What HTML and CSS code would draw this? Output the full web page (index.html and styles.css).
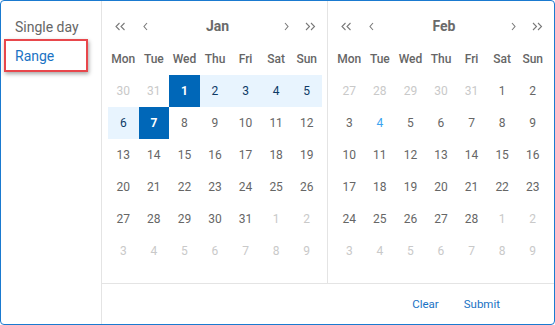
FILE: index.html
```html
<!DOCTYPE html>
<html lang="en">
<head>
    <meta charset="UTF-8">
    <meta name="viewport" content="width=device-width, initial-scale=1.0">
    <title>Date range picker</title>
    <link rel="stylesheet" href="styles.css">
</head>
<body>
    <div class="picker">
        <div class="sidebar">
            <div class="option">Single day</div>
            <div class="option active">Range</div>
        </div>
        <div class="main">
            <div class="months">
                <div class="month" id="month-jan"></div>
                <div class="month" id="month-feb"></div>
            </div>
            <div class="footer">
                <button class="link">Clear</button>
                <button class="link">Submit</button>
            </div>
        </div>
    </div>

    <script>
        const dayNames = ["Mon", "Tue", "Wed", "Thu", "Fri", "Sat", "Sun"];
        const rangeStart = new Date(2025, 0, 1);
        const rangeEnd = new Date(2025, 0, 7);
        const today = new Date(2025, 1, 4);

        const chevron = (dir, double) => {
            let paths = dir === "left"
                ? (double ? "M4.5 1 L1 4.5 L4.5 8 M9.5 1 L6 4.5 L9.5 8" : "M4 1 L1 4.5 L4 8")
                : (double ? "M1 1 L4.5 4.5 L1 8 M6 1 L9.5 4.5 L6 8" : "M1 1 L4 4.5 L1 8");
            let w = double ? 11 : 5;
            return `<svg width="${w}" height="9" viewBox="0 0 ${w} 9"><path d="${paths}" fill="none" stroke="#7a7a7a" stroke-width="1.1"/></svg>`;
        };

        function sameDay(a, b) {
            return a.getFullYear() === b.getFullYear() && a.getMonth() === b.getMonth() && a.getDate() === b.getDate();
        }

        function renderMonth(el, year, month, label) {
            let html = `<div class="nav">
                <button class="nav-btn">${chevron("left", true)}</button>
                <button class="nav-btn">${chevron("left", false)}</button>
                <div class="title">${label}</div>
                <button class="nav-btn">${chevron("right", false)}</button>
                <button class="nav-btn">${chevron("right", true)}</button>
            </div>`;
            html += `<div class="grid">`;
            dayNames.forEach(d => html += `<div class="head">${d}</div>`);

            let first = new Date(year, month, 1);
            let offset = (first.getDay() + 6) % 7;
            let start = new Date(year, month, 1 - offset);

            for (let i = 0; i < 42; i++) {
                let d = new Date(start.getFullYear(), start.getMonth(), start.getDate() + i);
                let cls = ["day"];
                if (d.getMonth() !== month) {
                    cls.push("other");
                } else {
                    if (sameDay(d, rangeStart) || sameDay(d, rangeEnd)) cls.push("selected");
                    else if (d > rangeStart && d < rangeEnd) cls.push("in-range");
                    if (sameDay(d, today)) cls.push("today");
                }
                html += `<div class="${cls.join(" ")}">${d.getDate()}</div>`;
            }
            html += `</div>`;
            el.innerHTML = html;
        }

        renderMonth(document.getElementById("month-jan"), 2025, 0, "Jan");
        renderMonth(document.getElementById("month-feb"), 2025, 1, "Feb");
    </script>
</body>
</html>
```

FILE: styles.css
```css
body {
    margin: 0;
    font-family: Roboto, "Liberation Sans", sans-serif;
    background: #fff;
}
.picker {
    display: flex;
    width: 555px;
    height: 325px;
    box-sizing: border-box;
    border: 1px solid #1a7ad0;
    border-radius: 4px;
    overflow: hidden;
    background: #fff;
}
.sidebar {
    width: 100px;
    flex-shrink: 0;
    border-right: 1px solid #e4e4e4;
    padding-top: 12px;
}
.option {
    position: relative;
    height: 29px;
    line-height: 29px;
    width: 84px;
    margin-left: 3px;
    padding-left: 11px;
    box-sizing: border-box;
    font-size: 14px;
    color: #666;
}
.option.active {
    color: #1a73c4;
}
.option.active::after {
    content: "";
    position: absolute;
    top: -3px;
    bottom: -1px;
    left: 0;
    right: 0;
    border: 2px solid #e8474c;
    box-shadow: 1px 2px 4px rgba(0, 0, 0, 0.35);
}
.main {
    flex: 1;
    display: flex;
    flex-direction: column;
}
.months {
    display: flex;
    height: 282px;
    border-bottom: 1px solid #e4e4e4;
}
.month {
    width: 226px;
    box-sizing: border-box;
    padding: 8px 5px 0 6px;
}
.month:first-child {
    border-right: 1px solid #e4e4e4;
}
.nav {
    display: flex;
    align-items: center;
    height: 34px;
}
.nav-btn {
    width: 24px;
    height: 24px;
    border: none;
    background: none;
    padding: 0;
    display: flex;
    align-items: center;
    justify-content: center;
    cursor: pointer;
}
.nav-btn:nth-child(2) {
    margin-left: 1px;
}
.title {
    flex: 1;
    text-align: center;
    font-size: 14px;
    font-weight: 700;
    color: #6a6a6a;
    padding-left: 4px;
}
.grid {
    display: grid;
    grid-template-columns: repeat(7, 1fr);
    width: 214px;
}
.head {
    height: 32px;
    line-height: 32px;
    text-align: center;
    font-size: 12px;
    font-weight: 500;
    color: #666;
}
.day {
    height: 32px;
    line-height: 32px;
    text-align: center;
    font-size: 12px;
    color: #666;
}
.day.other {
    color: #c9c9c9;
}
.day.in-range {
    background: #e8f4fe;
    color: #0d3a66;
}
.day.selected {
    background: #0067b8;
    color: #fff;
    font-weight: 700;
}
.day.today {
    color: #3ba3f0;
}
.footer {
    flex: 1;
    display: flex;
    align-items: center;
    justify-content: flex-end;
    gap: 25px;
    padding-right: 54px;
}
.link {
    border: none;
    background: none;
    padding: 0;
    font-family: inherit;
    font-size: 11.5px;
    color: #1a73c4;
    cursor: pointer;
}
```
